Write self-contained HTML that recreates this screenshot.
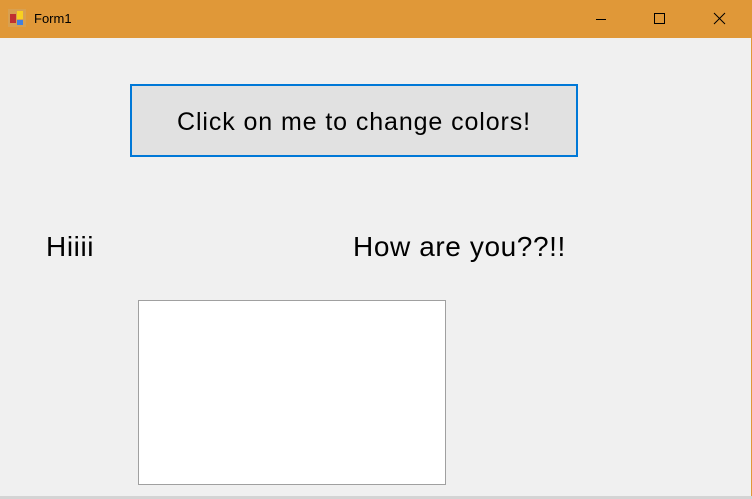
<!DOCTYPE html>
<html><head><style>
body{margin:0;width:752px;height:499px;background:#d4d4d4;position:relative;overflow:hidden;font-family:"Liberation Sans",Arial,sans-serif}
.win{position:absolute;left:0;top:0;width:751px;height:496px;background:#f0f0f0;border-right:1px solid #e09838}
.tb{position:absolute;left:0;top:0;width:752px;height:38px;background:#e09838}
.t{position:absolute;left:34px;top:11px;font-size:13px;color:#000}
.btn{position:absolute;left:130px;top:84px;width:444px;height:69px;border:2px solid #0078d7;background:#e1e1e1;font-size:25px;letter-spacing:0.9px;line-height:72px;text-align:center;color:#000}
.l{position:absolute;font-size:28px;letter-spacing:0.6px;color:#000}
.box{position:absolute;left:138px;top:300px;width:306px;height:183px;background:#fff;border:1px solid #a0a0a0}
</style></head><body>
<div class="win"></div>
<div class="tb">
<svg style="position:absolute;left:8px;top:9px" width="18" height="18"><rect x="0" y="0" width="18" height="18" fill="#d8a050"/><rect x="2" y="5" width="6" height="9" fill="#c03030"/><rect x="9" y="2" width="6" height="8" fill="#f8d020"/><rect x="9" y="11" width="6" height="5" fill="#4080e0"/></svg>
<div class="t">Form1</div>
<svg style="position:absolute;left:590px;top:12px" width="140" height="14" stroke="#000" fill="none" stroke-width="1"><line x1="6" y1="7.5" x2="16" y2="7.5"/><rect x="64.5" y="1.5" width="10" height="10"/><path d="M124 1L135 12M135 1L124 12"/></svg>
</div>
<div class="btn">Click on me to change colors!</div>
<div class="l" style="left:46px;top:231px">Hiiii</div>
<div class="l" style="left:353px;top:231px">How are you??!!</div>
<div class="box"></div>
</body></html>
